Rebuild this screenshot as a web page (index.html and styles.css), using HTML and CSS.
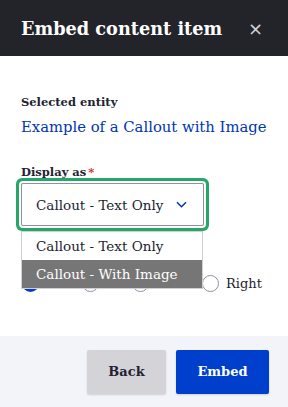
FILE: index.html
```html
<!DOCTYPE html>
<html lang="en">

<head>
    <meta charset="UTF-8">
    <meta name="viewport" content="width=device-width, initial-scale=1.0">
    <title>Embed content item</title>
    <link rel="stylesheet" href="styles.css">
</head>

<body>
    <div class="dialog">
        <div class="titlebar">
            <h1 class="title">Embed content item</h1>
            <span class="close">&times;</span>
        </div>
        <div class="content">
            <div class="field">
                <div class="label">Selected entity</div>
                <a class="entity" href="#">Example of a Callout with Image</a>
            </div>
            <div class="field select-field">
                <div class="label">Display as<span class="req">*</span></div>
                <div class="select">
                    <span>Callout - Text Only</span>
                    <svg class="chevron" width="11" height="7" viewBox="0 0 11 7">
                        <path d="M1 1.2l4.5 4.5 4.5-4.5" fill="none" stroke="#0036b1" stroke-width="1.5" />
                    </svg>
                </div>
                <ul class="options">
                    <li>Callout - Text Only</li>
                    <li class="active">Callout - With Image</li>
                </ul>
            </div>
            <div class="radios">
                <span class="radio checked"></span>
                <span class="radio"></span>
                <span class="radio"></span>
                <span class="radio"></span>
                <span class="radio-label">Right</span>
            </div>
        </div>
        <div class="footer">
            <button class="btn back">Back</button>
            <button class="btn primary">Embed</button>
        </div>
    </div>
</body>

</html>
```

FILE: styles.css
```css
* {
    margin: 0;
    padding: 0;
    box-sizing: border-box;
}

body {
    font-family: 'DejaVu Serif', serif;
    color: #222330;
    background: #fff;
}

.dialog {
    width: 288px;
    height: 407px;
    display: flex;
    flex-direction: column;
}

.titlebar {
    height: 56px;
    background: #232429;
    display: flex;
    align-items: center;
    justify-content: space-between;
    padding: 0 25px 0 21px;
}

.title {
    color: #fff;
    font-size: 17.7px;
    font-weight: bold;
}

.close {
    color: #d4d4d8;
    font-family: 'DejaVu Sans', sans-serif;
    font-size: 18px;
}

.content {
    flex: 1;
    padding: 38px 21px 0;
}

.field {
    margin-bottom: 26px;
}

.label {
    font-size: 11.5px;
    font-weight: bold;
    line-height: 16px;
    margin-bottom: 6px;
}

.req {
    color: #d72222;
    margin-left: 2px;
}

.entity {
    display: block;
    color: #0036b1;
    font-size: 14.8px;
    text-decoration: none;
    line-height: 22px;
    white-space: nowrap;
}

.select-field {
    position: relative;
    margin-bottom: 0;
}

.select-field .label {
    margin-bottom: 3px;
}

.select {
    width: 183px;
    height: 43px;
    border: 1px solid #8e929c;
    border-radius: 2px;
    display: flex;
    align-items: center;
    justify-content: space-between;
    padding: 0 16px 0 14px;
    font-size: 13.5px;
    box-shadow: 0 0 0 2px #fff, 0 0 0 5px #26a769;
}

.options {
    position: absolute;
    left: 0;
    top: 67px;
    width: 182px;
    list-style: none;
    background: #fff;
    border: 1px solid #d0d0d4;
    font-size: 13.5px;
    z-index: 1;
}

.options li {
    height: 28px;
    line-height: 28px;
    padding-left: 14px;
}

.options .active {
    background: #767676;
    color: #fff;
}

.radios {
    display: flex;
    align-items: center;
    padding-left: 1px;
    margin-top: 49px;
}

.radio {
    width: 17px;
    height: 17px;
    border: 1px solid #8e929c;
    border-radius: 50%;
    margin-right: 43px;
}

.radio.checked {
    border: 5px solid #003ecc;
}

.radio:nth-child(2) {
    margin-right: 33px;
}

.radio:nth-child(3) {
    margin-right: 53px;
}

.radio:nth-child(4) {
    margin-right: 7px;
}

.radio-label {
    font-size: 13px;
}

.footer {
    height: 71px;
    background: #f3f4f9;
    display: flex;
    justify-content: flex-end;
    align-items: center;
    padding: 0 19px 0 0;
    gap: 10px;
}

.btn {
    height: 44px;
    border: none;
    border-radius: 2px;
    font-family: 'DejaVu Serif', serif;
    font-weight: bold;
    font-size: 13px;
    box-shadow: 0 1px 2px rgba(0, 0, 0, .15);
}

.back {
    width: 79px;
    background: #d4d4d8;
    color: #222330;
}

.primary {
    width: 93px;
    background: #003ecc;
    color: #fff;
}
```
